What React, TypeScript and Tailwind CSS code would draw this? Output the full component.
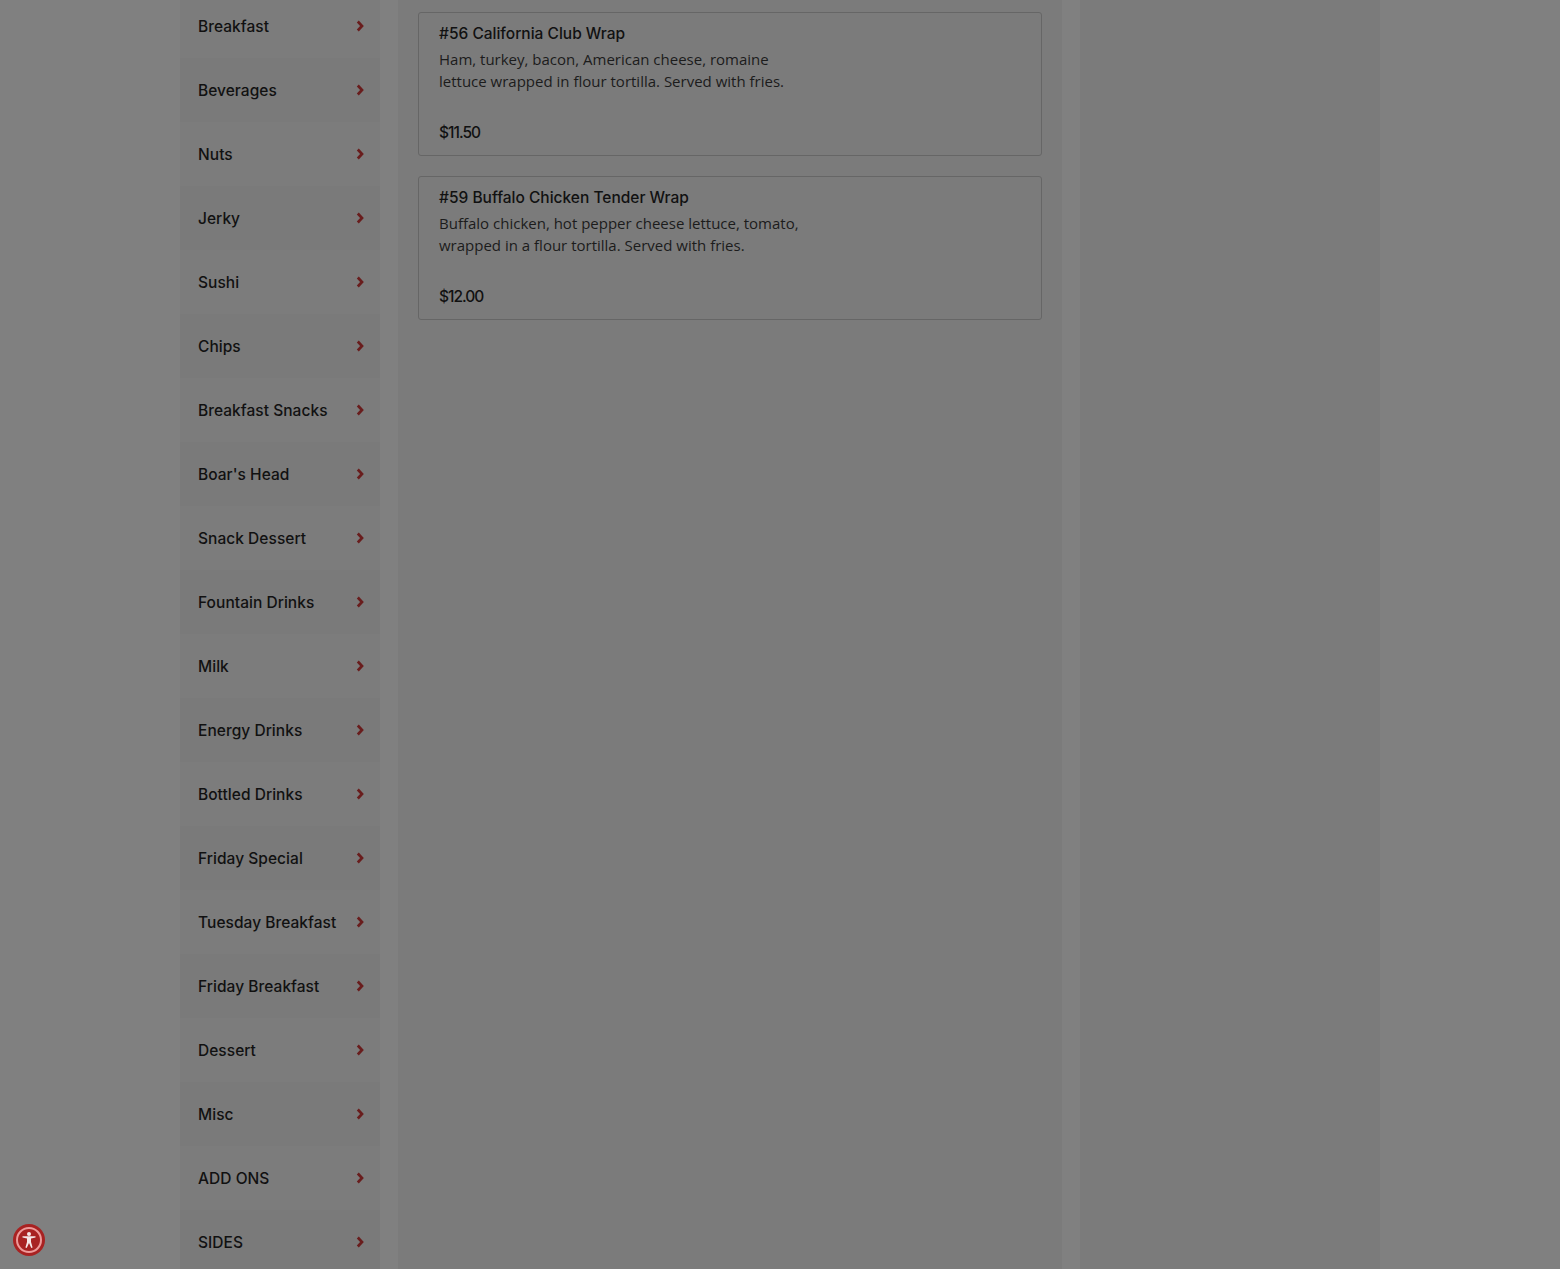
const cats = ["Breakfast","Beverages","Nuts","Jerky","Sushi","Chips","Breakfast Snacks","Boar's Head","Snack Dessert","Fountain Drinks","Milk","Energy Drinks","Bottled Drinks","Friday Special","Tuesday Breakfast","Friday Breakfast","Dessert","Misc","ADD ONS","SIDES"];
const items = [
  { title: "#56 California Club Wrap", lines: ["Ham, turkey, bacon, American cheese, romaine", "lettuce wrapped in flour tortilla. Served with fries."], price: "$11.50" },
  { title: "#59 Buffalo Chicken Tender Wrap", lines: ["Buffalo chicken, hot pepper cheese lettuce, tomato,", "wrapped in a flour tortilla. Served with fries."], price: "$12.00" },
];
const heading = "font-['Inter','Liberation_Sans',sans-serif] font-medium text-[15.5px] text-[#111]";
export default function App() {
  return (
    <div className="relative h-[1269px] overflow-hidden bg-[#808080]">
      <div className="mx-auto -mt-[6px] flex w-[1200px] gap-[18px]">
        <aside className="flex w-[200px] shrink-0 flex-col">
          {cats.map((c, i) => (
            <div key={c} className={`flex h-16 items-center justify-between pl-[18px] pr-4 ${i % 2 ? "bg-[#7a7a7a]" : "bg-[#7c7c7c]"}`}>
              <span className={`${heading} pt-0.5 tracking-[0.04px]`}>{c}</span>
              <svg width="8" height="12" viewBox="0 0 8 12" fill="none" aria-hidden="true"><path d="M1.8 1.5 6 6l-4.2 4.5" stroke="#691d1d" strokeWidth="2.7" /></svg>
            </div>
          ))}
        </aside>
        <main className="flex h-[1300px] w-[664px] shrink-0 flex-col gap-5 bg-[#7b7b7b] px-5 pt-[18px]">
          {items.map((it) => (
            <div key={it.title} className="flex h-[144px] flex-col rounded-[3px] border border-[#666] px-5 pt-[11px]">
              <h3 className={`${heading} leading-5`}>{it.title}</h3>
              <p className="mt-[4px] font-['Open_Sans',sans-serif] text-[15px] leading-[22px] text-[#1c1c1c]">{it.lines[0]}<br />{it.lines[1]}</p>
              <div className={`${heading} mt-[31px] leading-5 tracking-[-1px]`}>{it.price}</div>
            </div>
          ))}
        </main>
        <aside className="w-[300px] shrink-0 bg-[#7b7b7b]" />
      </div>
      <div className="absolute bottom-[13px] left-[13px] flex h-8 w-8 items-center justify-center rounded-full bg-[#a82222]">
        <div className="flex h-[26px] w-[26px] items-center justify-center rounded-full border-2 border-[#ee9a9a]">
          <svg width="16" height="18" viewBox="0 0 16 18" fill="#f4e6e6" aria-hidden="true"><circle cx="8" cy="3" r="2" /><path d="M1.5 5.2h13v1.4L10 7.6V11l1.6 5.6-1.3.4L8 12l-2.3 5-1.3-.4L6 11V7.6L1.5 6.6z" /></svg>
        </div>
      </div>
    </div>
  );
}
